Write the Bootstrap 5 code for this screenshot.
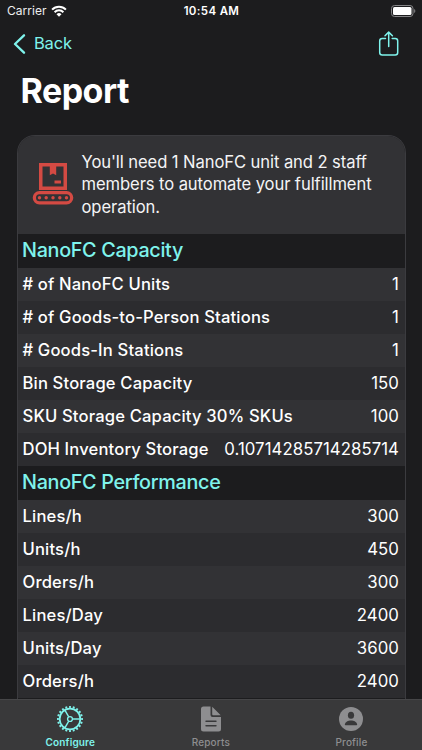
<!DOCTYPE html>
<html lang="en" data-bs-theme="dark">
<head>
<meta charset="utf-8">
<meta name="viewport" content="width=device-width, initial-scale=1">
<title>Report</title>
<link href="https://cdn.jsdelivr.net/npm/bootstrap@5.3.0/dist/css/bootstrap.min.css" rel="stylesheet">
<style>
:root{--mint:#7ff3ec}
body{background:#1c1c1e;color:#fff;font-family:Inter,"Liberation Sans",sans-serif}
svg{display:block;flex:none}
.screen{height:750px}
.status{height:22px;font-size:12px;padding:0 6px 0 7px}
.status>*{flex:1 1 0}
.carrier{letter-spacing:.05px;color:#eee}
.clock{font-size:11.5px;letter-spacing:.35px;padding-top:1px}
.topnav{height:43px;padding:0 22px 0 13px}
.mint{color:var(--mint)}
.back{font-size:16.5px;gap:8px;letter-spacing:-.2px}
.title{font-size:34px;line-height:40px;letter-spacing:-.5px;margin:6px 0 24px 20.5px}
.report{width:389px;margin-left:16.5px;border:1px solid #3b3b3f;border-bottom:0;border-radius:18px 18px 0 0}
.summary{height:98px;background:#323235;padding:0 12px 1px 14.5px;gap:7.5px}
.summary svg{margin-top:-2px}
.summary p{font-size:16.6px;line-height:22.5px;letter-spacing:-.09px;color:#f4f4f5}
.section-title{height:33.5px;font-size:19.8px;font-weight:550;letter-spacing:-.32px;padding:0 0 .4px 4.5px;background:#1c1c1e}
.section-title.later{height:34.3px}
.line{height:33px;font-size:16.8px;line-height:33.5px;padding:0 5.5px 0 5px;letter-spacing:.05px;background:#2c2c2f}
.line .label{font-size:16.6px;font-weight:550;letter-spacing:.16px}
.line:nth-child(odd){background:#323235}
.tabs{height:51px;background:#39393a;border-top:1px solid #464648;font-size:10px;letter-spacing:.15px;color:#8e8e90}
.tabs a{width:140.6px;padding-top:5px;gap:2px;line-height:15px}
</style>
</head>
<body>
<div class="screen d-flex flex-column overflow-hidden">
  <div class="status d-flex align-items-center">
    <div class="d-flex align-items-center gap-1"><span class="carrier">Carrier</span>
      <svg width="16" height="12" viewBox="0 0 16 12" fill="none" stroke="#fff" stroke-width="2"><path d="M1.1 4.6a9.7 9.7 0 0 1 13.8 0M3.6 7.2a6.2 6.2 0 0 1 8.8 0"/><path d="M5.5 9.2a3.5 3.5 0 0 1 5 0L8 11.7z" fill="#fff" stroke="none"/></svg>
    </div>
    <div class="clock fw-semibold text-center text-nowrap">10:54 AM</div>
    <div class="d-flex justify-content-end"><svg width="25" height="12" viewBox="0 0 25 12"><rect x=".5" y=".5" width="21.5" height="11" rx="3" fill="none" stroke="#858587"/><rect x="2" y="2" width="18.5" height="8" rx="1.5" fill="#fff"/><path d="M23.2 4v4c1.5-.6 1.5-3.400 0-4z" fill="#858587"/></svg></div>
  </div>
  <nav class="topnav d-flex align-items-center justify-content-between">
    <a href="#" class="back mint d-flex align-items-center text-decoration-none"><svg width="13" height="20" viewBox="0 0 13 20" fill="none" stroke="currentColor" stroke-width="2.300" stroke-linecap="round" stroke-linejoin="round"><path d="M11 1.300 2 10l9 8.700"/></svg>Back</a>
    <a href="#" class="mint" aria-label="Share"><svg width="22" height="26" viewBox="0 0 22 26" fill="none" stroke="currentColor" stroke-width="1.500" stroke-linecap="round" stroke-linejoin="round"><path d="M7.500 7.500H4.200Q1.700 7.500 1.700 10V21.500Q1.700 24 4.200 24H17.200Q19.700 24 19.700 21.500V10Q19.700 7.500 17.200 7.500H14.200M10.700 15.500V1.200M7 4.800 10.700 1.100l3.700 3.700"/></svg></a>
  </nav>
  <h1 class="title fw-bold">Report</h1>
  <main class="report flex-grow-1 overflow-hidden">
    <div class="summary d-flex align-items-center">
      <svg width="42" height="42" viewBox="0 0 42 42" fill="#d44a43"><path fill-rule="evenodd" d="M7 0h28v27H7zM10.500 3.500v20h21v-20h-7.300v8.800L21 10.500l-3.200 1.800V3.500z"/><path d="M22.500 17.500h6.500v3h-6.500z"/><path fill-rule="evenodd" d="M7.500 28h27a6.800 6.800 0 0 1 0 13.600h-27a6.800 6.800 0 0 1 0-13.600zm0 3.300a3.500 3.500 0 0 0 0 7h27a3.500 3.500 0 0 0 0-7z"/><circle cx="7.500" cy="34.800" r="1.700"/><circle cx="14.200" cy="34.800" r="1.700"/><circle cx="21" cy="34.800" r="1.700"/><circle cx="27.800" cy="34.800" r="1.700"/><circle cx="34.500" cy="34.800" r="1.700"/></svg>
      <p class="mb-0 text-nowrap">You'll need 1 NanoFC unit and 2 staff<br>members to automate your fulfillment<br>operation.</p>
    </div>
    <h2 class="section-title mint mb-0 d-flex align-items-center">NanoFC Capacity</h2>
    <div>
      <div class="line d-flex justify-content-between"><span class="label"># of NanoFC Units</span><span>1</span></div>
      <div class="line d-flex justify-content-between"><span class="label"># of Goods-to-Person Stations</span><span>1</span></div>
      <div class="line d-flex justify-content-between"><span class="label"># Goods-In Stations</span><span>1</span></div>
      <div class="line d-flex justify-content-between"><span class="label">Bin Storage Capacity</span><span>150</span></div>
      <div class="line d-flex justify-content-between"><span class="label">SKU Storage Capacity 30% SKUs</span><span>100</span></div>
      <div class="line d-flex justify-content-between"><span class="label">DOH Inventory Storage</span><span>0.10714285714285714</span></div>
    </div>
    <h2 class="section-title later mint mb-0 d-flex align-items-center">NanoFC Performance</h2>
    <div>
      <div class="line d-flex justify-content-between"><span class="label">Lines/h</span><span>300</span></div>
      <div class="line d-flex justify-content-between"><span class="label">Units/h</span><span>450</span></div>
      <div class="line d-flex justify-content-between"><span class="label">Orders/h</span><span>300</span></div>
      <div class="line d-flex justify-content-between"><span class="label">Lines/Day</span><span>2400</span></div>
      <div class="line d-flex justify-content-between"><span class="label">Units/Day</span><span>3600</span></div>
      <div class="line d-flex justify-content-between"><span class="label">Orders/h</span><span>2400</span></div>
    </div>
  </main>
  <nav class="tabs d-flex flex-shrink-0 fw-medium">
    <a href="#" class="mint d-flex flex-column align-items-center text-decoration-none fw-semibold">
      <svg width="28" height="28" viewBox="-14 -14 28 28" fill="none" stroke="currentColor"><circle r="12" stroke-width="2" pathLength="40" stroke-dasharray="1 1" stroke-dashoffset=".5"/><circle r="10.300" stroke-width="1.700"/><circle r="2.400" stroke-width="1.400"/><path stroke-width="1.500" d="M2.600 0H10M-1.300-2.250-5-8.700M-1.300 2.250-5 8.700"/></svg>Configure</a>
    <a href="#" class="d-flex flex-column align-items-center text-decoration-none text-reset">
      <svg width="28" height="28" viewBox="0 0 28 28"><path fill="currentColor" d="M6.500 1.500h7v8.500q0 2 2 2H24v12q0 2.500-2.500 2.500h-15Q4 26.500 4 24V4Q4 1.500 6.500 1.500zM15.200 1.800 23.700 10.300H16.200q-1 0-1-1z"/><path stroke="#39393a" stroke-width="1.400" stroke-linecap="round" d="M9 16.300h10M9 20.700h10"/></svg>Reports</a>
    <a href="#" class="d-flex flex-column align-items-center text-decoration-none text-reset">
      <svg width="28" height="28" viewBox="-14 -14 28 28"><circle r="12" fill="currentColor"/><ellipse cy="-3.700" rx="3.100" ry="3.500" fill="#39393a"/><path fill="#39393a" d="M-6.200 5.600C-5.500 0 5.500 0 6.200 5.600Q6.200 6.300 5.500 6.300h-11Q-6.200 6.300-6.200 5.600z"/></svg>Profile</a>
  </nav>
</div>
<script src="https://cdn.jsdelivr.net/npm/bootstrap@5.3.0/dist/js/bootstrap.bundle.min.js"></script>
</body>
</html>
